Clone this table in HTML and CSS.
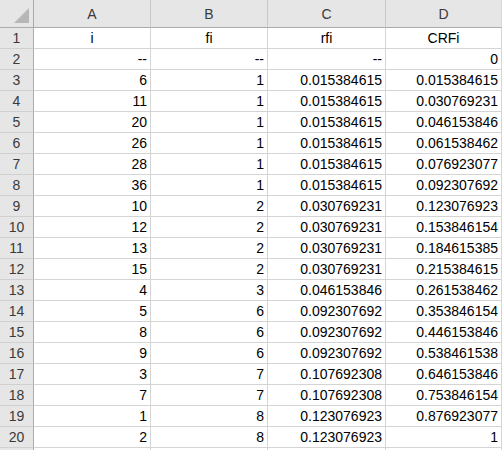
FILE: index.html
```html
<!DOCTYPE html>
<html>
<head>
<meta charset="utf-8">
<link rel="stylesheet" href="styles.css">
</head>
<body>
<div class="sheet">
  <div class="corner"><svg class="tri" width="16" height="16" viewBox="0 0 16 16"><polygon points="15,0 15,15 0,15" fill="#b7b7b7"/></svg></div>
  <div class="colh">A</div><div class="colh">B</div><div class="colh">C</div><div class="colh last">D</div>

  <div class="rowh">1</div><div class="c ctr">i</div><div class="c ctr">fi</div><div class="c ctr">rfi</div><div class="c ctr">CRFi</div>
  <div class="rowh">2</div><div class="c">--</div><div class="c">--</div><div class="c">--</div><div class="c">0</div>
  <div class="rowh">3</div><div class="c">6</div><div class="c">1</div><div class="c">0.015384615</div><div class="c">0.015384615</div>
  <div class="rowh">4</div><div class="c">11</div><div class="c">1</div><div class="c">0.015384615</div><div class="c">0.030769231</div>
  <div class="rowh">5</div><div class="c">20</div><div class="c">1</div><div class="c">0.015384615</div><div class="c">0.046153846</div>
  <div class="rowh">6</div><div class="c">26</div><div class="c">1</div><div class="c">0.015384615</div><div class="c">0.061538462</div>
  <div class="rowh">7</div><div class="c">28</div><div class="c">1</div><div class="c">0.015384615</div><div class="c">0.076923077</div>
  <div class="rowh">8</div><div class="c">36</div><div class="c">1</div><div class="c">0.015384615</div><div class="c">0.092307692</div>
  <div class="rowh">9</div><div class="c">10</div><div class="c">2</div><div class="c">0.030769231</div><div class="c">0.123076923</div>
  <div class="rowh">10</div><div class="c">12</div><div class="c">2</div><div class="c">0.030769231</div><div class="c">0.153846154</div>
  <div class="rowh">11</div><div class="c">13</div><div class="c">2</div><div class="c">0.030769231</div><div class="c">0.184615385</div>
  <div class="rowh">12</div><div class="c">15</div><div class="c">2</div><div class="c">0.030769231</div><div class="c">0.215384615</div>
  <div class="rowh">13</div><div class="c">4</div><div class="c">3</div><div class="c">0.046153846</div><div class="c">0.261538462</div>
  <div class="rowh">14</div><div class="c">5</div><div class="c">6</div><div class="c">0.092307692</div><div class="c">0.353846154</div>
  <div class="rowh">15</div><div class="c">8</div><div class="c">6</div><div class="c">0.092307692</div><div class="c">0.446153846</div>
  <div class="rowh">16</div><div class="c">9</div><div class="c">6</div><div class="c">0.092307692</div><div class="c">0.538461538</div>
  <div class="rowh">17</div><div class="c">3</div><div class="c">7</div><div class="c">0.107692308</div><div class="c">0.646153846</div>
  <div class="rowh">18</div><div class="c">7</div><div class="c">7</div><div class="c">0.107692308</div><div class="c">0.753846154</div>
  <div class="rowh">19</div><div class="c">1</div><div class="c">8</div><div class="c">0.123076923</div><div class="c">0.876923077</div>
  <div class="rowh">20</div><div class="c">2</div><div class="c">8</div><div class="c">0.123076923</div><div class="c">1</div>
  <div class="rowh"></div><div class="c"></div><div class="c"></div><div class="c"></div><div class="c"></div>
</div>
</body>
</html>
```
FILE: styles.css
```css
html, body {
  margin: 0;
  padding: 0;
  background: #ffffff;
  overflow: hidden;
}
.sheet {
  display: grid;
  grid-template-columns: 34px 117px 117px 118px 116px;
  grid-template-rows: 28px repeat(21, 21px);
  width: 502px;
  height: 450px;
  overflow: hidden;
  font-family: "Liberation Sans", Arial, sans-serif;
  font-size: 14px;
  color: #000;
}
.sheet > div {
  box-sizing: border-box;
}
.corner {
  background: #e6e6e6;
  border-right: 1px solid #ababab;
  border-bottom: 1px solid #ababab;
  position: relative;
}
.tri {
  position: absolute;
  right: 3px;
  bottom: 3px;
}
.colh {
  background: #e6e6e6;
  border-right: 1px solid #c9c9c9;
  border-bottom: 1px solid #ababab;
  color: #3a3a3a;
  display: flex;
  align-items: center;
  justify-content: center;
  padding-top: 1px;
}
.colh.last {
  border-right: 1px solid #d8d8d8;
}
.rowh {
  background: #e6e6e6;
  border-right: 1px solid #ababab;
  border-bottom: 1px solid #d0d0d0;
  color: #3a3a3a;
  display: flex;
  align-items: flex-end;
  justify-content: center;
  padding-bottom: 2px;
}
.c {
  border-right: 1px solid #d4d4d4;
  border-bottom: 1px solid #d4d4d4;
  display: flex;
  align-items: flex-end;
  justify-content: flex-end;
  padding: 0 3px 2px 3px;
  white-space: nowrap;
}
.c.ctr {
  justify-content: center;
}
```
